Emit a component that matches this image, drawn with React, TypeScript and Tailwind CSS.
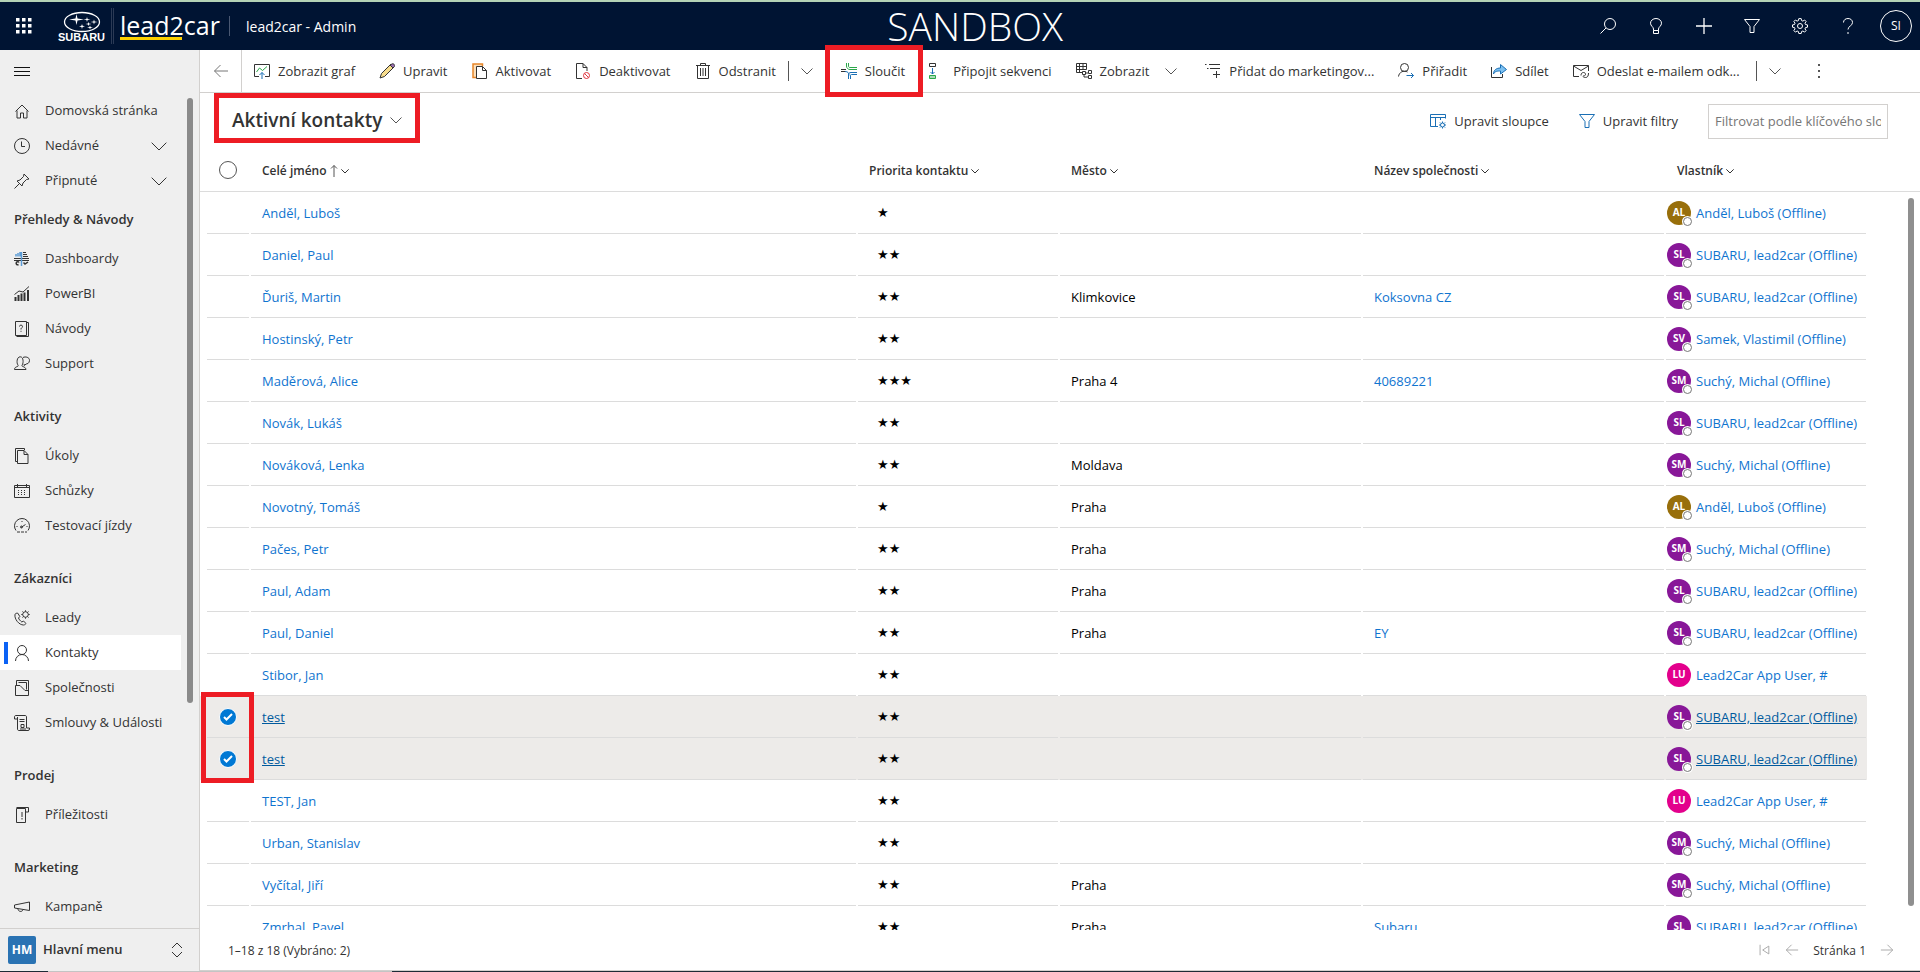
import React, { useState } from 'react';

type IconProps = { children: React.ReactNode; className?: string; size?: number };

const Icon = ({ children, className = 'text-[#333]', size = 16 }: IconProps) => (
  <svg
    width={size}
    height={size}
    viewBox="0 0 16 16"
    fill="none"
    stroke="currentColor"
    strokeWidth="1"
    className={`shrink-0 ${className}`}
    aria-hidden="true"
  >
    {children}
  </svg>
);

const BLUE = '#1a6fb5';
const GREEN = '#2ba84a';

const icons = {
  home: <path d="M1.5 8.5 8 2l6.5 6.5M3 7.5V15h3.5v-5h3v5H13V7.5" />,
  clock: <><circle cx="8" cy="8" r="7.5" /><path d="M7.5 3.5v5H11" /></>,
  pin: <path d="m.5 15.5 5-5M3 8l5 5 1-3 3.5-3.5 2.5-.5L10 1l-.5 2.5L6 7z" />,
  dashboards: (
    <>
      <path d="M0 7.5h15M0 9.5h15" />
      <path d="M7.5 15V1M2 5.5V3M4 5.5V2M6 5.5V1" stroke="#5b9bd5" strokeWidth="1.5" />
      <path d="M9 1.5h3M9 3.5h4M9 5.5h5" />
      <path d="M5 11.5a1.5 1.5 0 1 0-.5 2M9.5 11.5l1.5 1.5 3-2" strokeWidth="1.5" />
    </>
  ),
  powerbi: (
    <>
      <path d="M.5 8.5 5 5l4 1 6-5.5" />
      <path d="M1.5 15v-4M4.5 15V9M7.5 15V7.5M10.5 15V6.5M14 15V4" strokeWidth="2" />
    </>
  ),
  guide: (
    <>
      <path d="M1.5.5h11v14h-11zM12.5 1.5h2v14h-12" />
      <path d="M5.5 5.5a1.5 1.5 0 1 1 2 1.5c-.5.3-.5.7-.5 1.5M7 9.800v1" />
    </>
  ),
  support: (
    <path d="M.5 13.5c0-2 1.5-2.5 3-3 .8-.3.8-1 .3-1.7C2.5 7 2.7.8 6.2.8S9.500 7 8.3 8.8c-.5.7-.4 1.400.4 1.700 1.500.5 3 1 3.300 3zM9 1.500c2.500-1.200 6.500-.3 6.500 2.800S13 8 12.200 8l-2 1.500V8" />
  ),
  tasks: (
    <>
      <path d="M3 13.5H1.500V.5h9V2" />
      <path d="M3.5 2.500h6.500l4 4v9H3.500zM10 2.500v4h4" />
    </>
  ),
  calendar: (
    <>
      <path d="M.5 2.500h15v12H.5zM.5 4.500h15M3.500 1v3M12.500 1v3" />
      <path d="M4 7.500h9M4 9.500h9M4 11.500h9" strokeDasharray="1 2" />
    </>
  ),
  gauge: (
    <>
      <path d="M2 12.500a7.500 7.500 0 1 1 12 0" />
      <path d="M3 14h3M7 14h3M11 14h2" />
      <path d="m7 9.500 4.500-3M2.500 8.500h1M8 3v1M12.500 8.500h1" />
      <circle cx="7.500" cy="9" r="1" />
    </>
  ),
  leads: (
    <>
      <path d="M1 4.500C.2 9 5 15 9.500 15c1 0 1.500-.5 2.500-1.500l-2.500-2.500-1.700 1C6.500 11 5 9.500 4.500 8L5.800 6.500 3.800 3.200C2.500 3 1.200 3.500 1 4.500z" />
      <circle cx="11.500" cy="4.500" r="2.800" />
      <path d="M11.500.3v1.400M11.500 7.300v1.400M7.300 4.500h1.400M14.300 4.500h1.400M8.500 1.500l1 1M13.500 6.500l1 1M14.500 1.500l-1 1M9.500 6.500l-1 1" />
    </>
  ),
  person: <><circle cx="8" cy="5" r="4.500" /><path d="M1.500 16a6.500 6.500 0 0 1 13 0" /></>,
  company: (
    <>
      <path d="M2.500 5V.5h12v14" />
      <path d="M4.500 2.500h8v7" />
      <path d="M1.500 5.500H6l5 5h3.500v5h-13z" />
    </>
  ),
  contract: (
    <>
      <path d="M3.500 4V14c0 1 .5 1.500 1.500 1.500h9c1 0 1.500-.6 1.500-1.500v-1h-3V2c0-1-.5-1.500-1.500-1.500H2C1 .5.500 1 .5 2v2h3zM3.500 4V2" />
      <path d="M5.500 4.500h5M5.500 6.500h5M6 14h6" />
      <path d="M7 9.500h3v3H7z" />
    </>
  ),
  opportunity: <><path d="M2.500 1.500h9v14h-9zM2.500.5h12V5h-3" /><path d="M8 5v5M8 11v1.500" /></>,
  campaign: <path d="M.5 6 15.500 3v8.500L.5 9zM4 10c0 2.500 4 3.500 5 .8" />,

  chart: (
    <>
      <path d="M11 13.500h4.500v-12H.5v12H5" />
      <path d="m2.500 9 3-4 3 2.500 4.500-4" stroke={GREEN} />
      <path d="M8 16V9.500M5.500 12 8 9.500l2.500 2.500" stroke={BLUE} />
    </>
  ),
  pencil: (
    <>
      <path d="m1 15 1.500-4.500L12 1l3 3-9.500 9.500z" fill="#f7dc8c" />
      <path d="m11 2 3 3 1.200-1.200c.8-.8.5-1.800-.2-2.500s-1.900-.8-2.600 0z" fill="#9b6fb0" />
    </>
  ),
  activate: (
    <>
      <path d="M4 14.500H1V1h9.500v2" stroke="#e8862a" strokeWidth="1.500" fill="#fbe0bd" />
      <path d="M4.500 3.500h6l4 4v8h-10zM10.500 3.500v4h4" fill="#fff" />
    </>
  ),
  deactivate: (
    <>
      <path d="M7 15.500H1.500V.5H8L12 4.500V8M8 .5v4h4" />
      <circle cx="11.500" cy="12.500" r="3" stroke="#e0353f" />
      <path d="m9.500 10.500 4 4" stroke="#e0353f" />
    </>
  ),
  trash: <><path d="M1 2.500h14M5.500 2V.5h5V2M2.500 2.500v13h11v-13" /><path d="M5.500 5v8M8 5v8M10.500 5v8" /></>,
  merge: (
    <>
      <path d="M0 6.500h5M0 8.500h5" stroke="#333" />
      <path d="M5.500 0v3c0 2 1.500 3.500 3.500 3.500h7M7.500 0v3c0 1 .5 1.500 1.500 1.500h7" stroke={GREEN} />
      <path d="M16 9.500H10c-2 0-2.500 1-2.500 2.500v4M16 11.500h-5.500c-1 0-1 .5-1 1.500v3M4 8.500c3 0 4 1.500 4 4" stroke={BLUE} />
    </>
  ),
  sequence: (
    <>
      <path d="M.5.5h6v3h-6z" />
      <path d="M3.500 5v6M1.500 9l2 2 2-2" stroke={BLUE} />
      <path d="M.5 12.500h6v3h-6z" stroke={GREEN} fill="#a9dcb6" />
    </>
  ),
  view: (
    <>
      <path d="M.5.5h10v6M.5.5v9H6M.5 3.500h10M.5 6.500h10M3.500.5v9M7 .5v6" />
      <path d="M6.500 8.500h3v3h-3zM9.500 10h2.500M12.500 7.500h3v3h-3zM12.500 12.500h3v3h-3zM8 11.500v2.500h4" />
    </>
  ),
  addList: <path d="M0 1.500h1.500M4 1.500h11M2 5.500h1.500M5 5.500h10M11.500 8v7M8 11.500h7" />,
  assign: (
    <>
      <circle cx="6.500" cy="4.500" r="4" />
      <path d="M.5 13.500a6 6 0 0 1 9-4.500" />
      <path d="M8.500 12.500h7M13 10l2.500 2.500L13 15" stroke={BLUE} />
    </>
  ),
  share: (
    <>
      <path d="M.5 4v10.500h11V11" />
      <path d="M2.500 11c0-4 3-6 7-6V1.500l6 5-6 4.500V8c-3 0-5.500 0-7 3z" fill="#7cc0f0" stroke={BLUE} />
    </>
  ),
  mail: (
    <>
      <path d="M6 13.500H.5v-11h15V8M.5 3 8 7.500 15.500 3" />
      <path d="M8 12.500c0-2 1-3 2.500-3s2 1 2 2-1 1.500-2 1M15.500 10c0 3-1 4.500-3 4.500-1.500 0-2.500-.5-2.500-1.500" />
    </>
  ),
  columns: (
    <>
      <path d="M.5 1.500h15v4M.5 1.500v12H8M.5 4.500h15M5.500 4.500v9M10.500 4.500V7" />
      <circle cx="12.500" cy="12" r="2" />
      <path d="M12.500 8.500V10M12.500 14v1.500M9 12h1.500M14.500 12H16M10 9.500l1 1M14 13.500l1 1M15 9.500l-1 1M11 13.500l-1 1" />
    </>
  ),
  funnel: <path d="M.5 1.500h15L10 8.500v6H6v-6z" />,
  search: <><circle cx="10" cy="6" r="5.500" /><path d="M6 10 .5 15.500" /></>,
  bulb: <path d="M5.500 12.500V11C5.500 9 2.500 8 2.500 5.200a5.500 4.700 0 0 1 11 0C13.500 8 10.500 9 10.500 11v1.500zM5.500 12.500v3h5v-3" />,
  plus: <path d="M8 0v16M0 8h16" strokeWidth="1.300" />,
  gear: (
    <>
      <circle cx="8" cy="8" r="2.500" />
      <path d="M6.800.6h2.400l.4 2 1.300.5 1.700-1.100 1.500 1.500L13 5.200l.5 1.300 2 .4v2.300l-2 .4-.5 1.300 1.100 1.700-1.500 1.500-1.700-1.100-1.300.5-.4 2H6.800l-.4-2-1.300-.5-1.700 1.100L1.900 12.600 3 10.900l-.5-1.300-2-.4V6.900l2-.4L3 5.200 1.900 3.500 3.400 2l1.700 1.100 1.300-.5z" />
    </>
  ),
  help: <path d="M3.500 4.500C3.500 2 5.500.5 8 .5s4.500 1.500 4.500 4C12.500 8 8 8 8 11.500M8 14v2" />,
  back: <path d="M15 8H1.500M7.500 2 1.500 8l6 6" />,
  forward: <path d="M1 8h13.500M8.500 2l6 6-6 6" />,
  first: <path d="M3.500 2v12M13.500 3.500v9L6.500 8z" />,
};

const Chevron = ({ className = 'text-[#555]', size = 12 }: { className?: string; size?: number }) => (
  <svg width={size} height={size} viewBox="0 0 12 12" fill="none" stroke="currentColor" className={`shrink-0 ${className}`} aria-hidden="true">
    <path d="M.5 3.500 6 9l5.500-5.500" vectorEffect="non-scaling-stroke" />
  </svg>
);

// Red annotation frame laid over a control
const Frame = ({ className }: { className: string }) => (
  <span className={`pointer-events-none absolute z-20 border-[5px] border-[#ed1c24] ${className}`} />
);

type NavItem = { label: string; icon: React.ReactNode };

const quickLinks = [
  { label: 'Domovská stránka', icon: icons.home, expandable: false },
  { label: 'Nedávné', icon: icons.clock, expandable: true },
  { label: 'Připnuté', icon: icons.pin, expandable: true },
];

const navGroups: { title: string; items: NavItem[] }[] = [
  {
    title: 'Přehledy & Návody',
    items: [
      { label: 'Dashboardy', icon: icons.dashboards },
      { label: 'PowerBI', icon: icons.powerbi },
      { label: 'Návody', icon: icons.guide },
      { label: 'Support', icon: icons.support },
    ],
  },
  {
    title: 'Aktivity',
    items: [
      { label: 'Úkoly', icon: icons.tasks },
      { label: 'Schůzky', icon: icons.calendar },
      { label: 'Testovací jízdy', icon: icons.gauge },
    ],
  },
  {
    title: 'Zákazníci',
    items: [
      { label: 'Leady', icon: icons.leads },
      { label: 'Kontakty', icon: icons.person },
      { label: 'Společnosti', icon: icons.company },
      { label: 'Smlouvy & Události', icon: icons.contract },
    ],
  },
  { title: 'Prodej', items: [{ label: 'Příležitosti', icon: icons.opportunity }] },
  { title: 'Marketing', items: [{ label: 'Kampaně', icon: icons.campaign }] },
];

const owners = {
  AL: { initials: 'AL', name: 'Anděl, Luboš (Offline)', color: 'bg-[#986f0b]', offline: true },
  SL: { initials: 'SL', name: 'SUBARU, lead2car (Offline)', color: 'bg-[#881798]', offline: true },
  SV: { initials: 'SV', name: 'Samek, Vlastimil (Offline)', color: 'bg-[#881798]', offline: true },
  SM: { initials: 'SM', name: 'Suchý, Michal (Offline)', color: 'bg-[#881798]', offline: true },
  LU: { initials: 'LU', name: 'Lead2Car App User, #', color: 'bg-[#e3008c]', offline: false },
};

type Contact = { name: string; stars: number; city?: string; company?: string; owner: keyof typeof owners };

const contacts: Contact[] = [
  { name: 'Anděl, Luboš', stars: 1, owner: 'AL' },
  { name: 'Daniel, Paul', stars: 2, owner: 'SL' },
  { name: 'Ďuriš, Martin', stars: 2, city: 'Klimkovice', company: 'Koksovna CZ', owner: 'SL' },
  { name: 'Hostinský, Petr', stars: 2, owner: 'SV' },
  { name: 'Maděrová, Alice', stars: 3, city: 'Praha 4', company: '40689221', owner: 'SM' },
  { name: 'Novák, Lukáš', stars: 2, owner: 'SL' },
  { name: 'Nováková, Lenka', stars: 2, city: 'Moldava', owner: 'SM' },
  { name: 'Novotný, Tomáš', stars: 1, city: 'Praha', owner: 'AL' },
  { name: 'Pačes, Petr', stars: 2, city: 'Praha', owner: 'SM' },
  { name: 'Paul, Adam', stars: 2, city: 'Praha', owner: 'SL' },
  { name: 'Paul, Daniel', stars: 2, city: 'Praha', company: 'EY', owner: 'SL' },
  { name: 'Stibor, Jan', stars: 2, owner: 'LU' },
  { name: 'test', stars: 2, owner: 'SL' },
  { name: 'test', stars: 2, owner: 'SL' },
  { name: 'TEST, Jan', stars: 2, owner: 'LU' },
  { name: 'Urban, Stanislav', stars: 2, owner: 'SM' },
  { name: 'Vyčítal, Jiří', stars: 2, city: 'Praha', owner: 'SM' },
  { name: 'Zmrhal, Pavel', stars: 2, city: 'Praha', company: 'Subaru', owner: 'SL' },
];

const Header = () => {
  const actions = [
    { label: 'Hledat', icon: icons.search },
    { label: 'Tipy', icon: icons.bulb },
    { label: 'Nový', icon: icons.plus },
    { label: 'Filtr', icon: icons.funnel },
    { label: 'Nastavení', icon: icons.gear },
    { label: 'Nápověda', icon: icons.help },
  ];

  return (
    <header className="flex h-[50px] shrink-0 items-center border-t-2 border-[#b4d3b6] bg-[#001433] text-white">
      <button className="flex w-12 justify-center" aria-label="Aplikace">
        <svg width="16" height="16" viewBox="0 0 16 16" fill="currentColor">
          {[0, 6, 12].map((y) => [0, 6, 12].map((x) => <rect key={`${x}-${y}`} x={x} y={y} width="3.5" height="3.5" />))}
        </svg>
      </button>
      <div className="ml-2 flex w-[51px] flex-col items-center">
        <svg width="38" height="22" viewBox="0 0 38 22" fill="none" stroke="#fff">
          <ellipse cx="19" cy="11" rx="17.5" ry="9.5" strokeWidth="1.3" />
          <g fill="#fff" stroke="none">
            <path d="m13.500 3 1 4.500 6.500 1-6.500 1-1 4.500-1-4.500-6.500-1 6.500-1z" />
            <path d="m24 6 .6 1.900 2.900.6-2.900.6-.6 1.900-.6-1.900-2.900-.6 2.900-.6zM31 8.500l.6 1.900 2.900.6-2.900.6-.6 1.900-.6-1.900-2.900-.6 2.900-.6zM25.500 11l.6 1.500 2.400.5-2.400.5-.6 1.500-.6-1.500-2.400-.5 2.400-.5zM19 13l.6 1.700 2.400.6-2.400.6L19 18l-.6-2.100-2.400-.6 2.400-.6zM27 14.500l.6 1.500 2.400.5-2.400.5-.6 1.500-.6-1.500-2.400-.5 2.400-.5z" />
          </g>
        </svg>
        <span className="font-['Liberation_Sans',sans-serif] text-[11px] leading-2 font-bold">SUBARU</span>
      </div>
      <span className="ml-1 h-9 w-[3px] border-x border-[#2b3a55]" />
      <div className="ml-1.5 w-[101px]">
        <div className="text-[25px] leading-6 font-medium">lead2car</div>
        <div className="h-[3px] w-[62px] bg-[#fdd000]" />
      </div>
      <span className="ml-2 h-5 w-px bg-[#4a5872]" />
      <span className="ml-4 pt-0.5 text-sm">lead2car - Admin</span>
      <h1 className="flex-1 pl-2.5 text-center text-[39px] leading-12 font-light">SANDBOX</h1>
      {actions.map((a) => (
        <button key={a.label} aria-label={a.label} className="flex w-12 justify-center">
          <Icon className="text-white">{a.icon}</Icon>
        </button>
      ))}
      <button className="mr-2 ml-2 flex size-8 items-center justify-center rounded-full border border-white text-xs">SI</button>
    </header>
  );
};

const Sidebar = () => (
  <aside className="flex w-[200px] shrink-0 flex-col border-r border-[#d2d0ce] bg-[#efefef]">
    <div className="flex min-h-0 flex-1 overflow-hidden">
      <nav className="w-[181px] shrink-0 text-[13px] text-[#333]">
        <button className="flex h-[43px] items-center pl-3.5" aria-label="Nabídka">
          <svg width="16" height="10" stroke="#111" aria-hidden="true">
            <path d="M0 .5h16M0 4.5h16M0 8.5h16" />
          </svg>
        </button>
        {quickLinks.map((item) => (
          <a key={item.label} href="#" className="flex h-[35px] items-center gap-[15px] pl-3.5">
            <Icon>{item.icon}</Icon>
            <span className="flex-1 whitespace-nowrap">{item.label}</span>
            {item.expandable && <Chevron size={16} className="mr-3.5 text-[#333]" />}
          </a>
        ))}
        {navGroups.map((group, index) => (
          <section key={group.title} className={index > 0 ? 'mt-3.5' : ''}>
            <h2 className="flex h-[43px] items-center pl-3.5 font-semibold">{group.title}</h2>
            {group.items.map((item) => {
              const isActive = item.label === 'Kontakty';
              return (
                <a
                  key={item.label}
                  href="#"
                  className={`relative flex h-[35px] items-center gap-[15px] pl-3.5 whitespace-nowrap ${isActive ? 'bg-white' : ''}`}
                >
                  {isActive && <span className="absolute left-1 h-[22px] w-1 bg-[#0b62f5]" />}
                  <Icon>{item.icon}</Icon>
                  {item.label}
                </a>
              );
            })}
          </section>
        ))}
      </nav>
      {/* Scrollbar */}
      <div className="mt-12 ml-1.5 h-[605px] w-1.5 rounded-full bg-[#8a8a8a]" />
    </div>
    <button className="flex h-[43px] shrink-0 items-center border-t border-[#d2d0ce] pr-3.5 pl-2 text-[#333]">
      <span className="flex size-7 items-center justify-center rounded-xs bg-[#2a73b3] text-xs font-bold text-white">HM</span>
      <span className="ml-[7px] flex-1 text-left text-[13px] font-semibold">Hlavní menu</span>
      <Icon>
        <path d="m3 6 5-5 5 5M3 10l5 5 5-5" />
      </Icon>
    </button>
  </aside>
);

type CommandProps = { label: string; icon: React.ReactNode; children?: React.ReactNode };

const Command = ({ label, icon, children }: CommandProps) => (
  <button className="relative flex h-full items-center gap-2 px-3 whitespace-nowrap">
    <Icon>{icon}</Icon>
    <span className="pt-0.5">{label}</span>
    {children}
  </button>
);

const CommandBar = () => (
  <div className="flex h-[43px] shrink-0 items-center border-b border-[#d2d0ce] text-[13px] text-[#333]">
    <button className="flex h-full w-[42px] items-center justify-center border-r border-[#d2d0ce]" aria-label="Zpět">
      <Icon className="text-[#777]">{icons.back}</Icon>
    </button>
    <Command label="Zobrazit graf" icon={icons.chart} />
    <Command label="Upravit" icon={icons.pencil} />
    <Command label="Aktivovat" icon={icons.activate} />
    <Command label="Deaktivovat" icon={icons.deactivate} />
    <Command label="Odstranit" icon={icons.trash} />
    <span className="h-5 w-px bg-[#555]" />
    <button className="px-3" aria-label="Další možnosti odstranění">
      <Chevron />
    </button>
    <div className="ml-1 h-full">
      <Command label="Sloučit" icon={icons.merge}>
        <Frame className="-inset-y-[5px] -right-1.5 -left-1" />
      </Command>
    </div>
    <Command label="Připojit sekvenci" icon={icons.sequence} />
    <Command label="Zobrazit" icon={icons.view}>
      <Chevron className="ml-2 text-[#555]" />
    </Command>
    <div className="ml-1 h-full">
      <Command label="Přidat do marketingov..." icon={icons.addList} />
    </div>
    <Command label="Přiřadit" icon={icons.assign} />
    <Command label="Sdílet" icon={icons.share} />
    <Command label="Odeslat e-mailem odk..." icon={icons.mail} />
    <span className="ml-1 h-5 w-px bg-[#555]" />
    <button className="px-3" aria-label="Další možnosti odeslání">
      <Chevron />
    </button>
    <button className="ml-3 px-3" aria-label="Další příkazy">
      <svg width="4" height="16" fill="#555" aria-hidden="true">
        <path d="M1 1h2v2H1zM1 7h2v2H1zM1 13h2v2H1z" />
      </svg>
    </button>
  </div>
);

const ViewBar = () => (
  <div className="flex h-14 shrink-0 items-center pr-8 text-[13px] text-[#333]">
    <div className="relative ml-3.5 flex h-full items-center">
      <Frame className="inset-x-0 top-0 h-[50px]" />
      <button className="flex items-center gap-2 px-[18px] pb-0.5 text-[19px] font-semibold">
        Aktivní kontakty
        <Chevron />
      </button>
    </div>
    <div className="ml-auto flex items-center gap-[30px]">
      <button className="flex items-center gap-2">
        <Icon className="text-[#1a6fb5]">{icons.columns}</Icon>
        <span className="pt-0.5">Upravit sloupce</span>
      </button>
      <button className="flex items-center gap-2">
        <Icon className="text-[#1a6fb5]">{icons.funnel}</Icon>
        <span className="pt-0.5">Upravit filtry</span>
      </button>
      <input
        type="text"
        aria-label="Filtrovat podle klíčového slova"
        placeholder="Filtrovat podle klíčového slova"
        className="h-[35px] w-[180px] border border-[#d2d0ce] px-1.5 placeholder:text-[#767676]"
      />
    </div>
  </div>
);

type CellProps = { children?: React.ReactNode; selected: boolean; className?: string };

const Cell = ({ children, selected, className = 'pl-[11px]' }: CellProps) => (
  <td className={`p-0 ${selected ? 'bg-[#edebe9]' : ''}`}>
    <div className={`mx-px flex h-[42px] items-center border-b border-[#dcdcdc] ${className}`}>{children}</div>
  </td>
);

const HeadCell = ({ label, sorted }: { label: string; sorted?: boolean }) => (
  <th className="border-b border-[#dcdcdc] p-0 text-left font-semibold">
    <button className="flex items-center gap-[3px] pt-0.5 pl-3">
      {label}
      {sorted && (
        <svg width="8" height="12" stroke="#555" fill="none" aria-hidden="true">
          <path d="M4 12V.5M1 3.5l3-3 3 3" />
        </svg>
      )}
      <Chevron size={8} className="text-[#333]" />
    </button>
  </th>
);

const ContactsTable = () => {
  const [selected, setSelected] = useState<number[]>([12, 13]);

  const toggle = (index: number) =>
    setSelected((prev) => (prev.includes(index) ? prev.filter((i) => i !== index) : [...prev, index]));

  return (
    <div className="relative min-h-0 flex-1 overflow-hidden">
      <table className="w-full table-fixed border-separate border-spacing-0 text-[13px]">
        <colgroup>
          <col className="w-[50px]" />
          <col />
          <col className="w-[202px]" />
          <col className="w-[303px]" />
          <col className="w-[303px]" />
          <col className="w-[202px]" />
          <col className="w-[53px]" />
        </colgroup>
        <thead>
          <tr className="h-[43px] text-xs text-[#333]">
            <th className="border-b border-[#dcdcdc] p-0">
              <input
                type="checkbox"
                aria-label="Vybrat vše"
                className="ml-[19px] block size-[18px] appearance-none rounded-full border border-[#555]"
              />
            </th>
            <HeadCell label="Celé jméno" sorted />
            <HeadCell label="Priorita kontaktu" />
            <HeadCell label="Město" />
            <HeadCell label="Název společnosti" />
            <HeadCell label="Vlastník" />
            <th className="border-b border-[#dcdcdc] p-0" />
          </tr>
        </thead>
        <tbody>
          {contacts.map((contact, index) => {
            const isSelected = selected.includes(index);
            const owner = owners[contact.owner];
            const link = isSelected ? 'text-[#005a9e] underline' : 'text-[#0f74cf]';

            return (
              <tr key={index}>
                <td className={`relative p-0 ${isSelected ? 'bg-[#edebe9]' : ''}`}>
                  {index === 12 && <Frame className="-top-1 left-px h-[91px] w-[53px]" />}
                  <label className="mr-px ml-[7px] flex h-[42px] items-center border-b border-[#dcdcdc] pl-3">
                    <input
                      type="checkbox"
                      aria-label={`Vybrat ${contact.name}`}
                      checked={isSelected}
                      onChange={() => toggle(index)}
                      className={`size-[18px] appearance-none rounded-full border border-white bg-[#0078d4] ${isSelected ? '' : 'opacity-0'}`}
                    />
                    {isSelected && (
                      <svg width="10" height="8" viewBox="0 0 10 8" fill="none" stroke="#fff" strokeWidth="2" className="-ml-3.5">
                        <path d="m1 4 2.500 2.500L9 1" />
                      </svg>
                    )}
                  </label>
                </td>
                <Cell selected={isSelected} className="pt-0.5 pl-[11px]">
                  <a href="#" className={link}>{contact.name}</a>
                </Cell>
                <Cell selected={isSelected} className="pl-[19px] font-['DejaVu_Sans',sans-serif] text-black">
                  {'★'.repeat(contact.stars)}
                </Cell>
                <Cell selected={isSelected} className="pt-0.5 pl-[11px] text-black">
                  {contact.city}
                </Cell>
                <Cell selected={isSelected} className="pt-0.5 pl-[11px]">
                  {contact.company && <a href="#" className={link}>{contact.company}</a>}
                </Cell>
                <Cell selected={isSelected} className="gap-[5px] pl-px">
                  <span className={`relative flex size-6 shrink-0 items-center justify-center rounded-full text-[10px] font-bold text-white ${owner.color}`}>
                    {owner.initials}
                    {owner.offline && (
                      <span className="absolute -right-0.5 -bottom-0.5 flex size-[11px] items-center justify-center rounded-full bg-white">
                        <span className="size-[9px] rounded-full border border-[#777]" />
                      </span>
                    )}
                  </span>
                  <a href="#" className={`pt-0.5 whitespace-nowrap ${link}`}>{owner.name}</a>
                </Cell>
                <td className="p-0" />
              </tr>
            );
          })}
        </tbody>
      </table>
      <div className="absolute top-[49px] right-1.5 bottom-6 w-1.5 rounded-full bg-[#8f8f8f]" />
    </div>
  );
};

const Pager = () => (
  <footer className="flex h-10 shrink-0 items-center justify-between pr-[26px] pl-7 text-xs text-[#333]">
    <span className="pt-0.5">1–18 z 18 (Vybráno: 2)</span>
    <div className="flex items-center gap-3.5">
      <button aria-label="První stránka"><Icon className="text-[#a0a0a0]" size={14}>{icons.first}</Icon></button>
      <button aria-label="Předchozí stránka"><Icon className="text-[#a0a0a0]" size={14}>{icons.back}</Icon></button>
      <span className="pt-0.5">Stránka 1</span>
      <button aria-label="Další stránka"><Icon className="text-[#a0a0a0]" size={14}>{icons.forward}</Icon></button>
    </div>
  </footer>
);

export default function App() {
  return (
    <div className="flex h-screen flex-col overflow-hidden bg-white font-['Open_Sans','Noto_Sans',sans-serif]">
      <Header />
      <div className="flex min-h-0 flex-1">
        <Sidebar />
        <main className="flex min-w-0 flex-1 flex-col border-b border-[#d2d0ce]">
          <CommandBar />
          <ViewBar />
          <ContactsTable />
          <Pager />
        </main>
      </div>
      {/* Window edge */}
      <div className="flex h-px shrink-0 bg-[#1d2a36]">
        <span className="ml-12 w-[344px] bg-[#c4c4c4]" />
      </div>
    </div>
  );
}
